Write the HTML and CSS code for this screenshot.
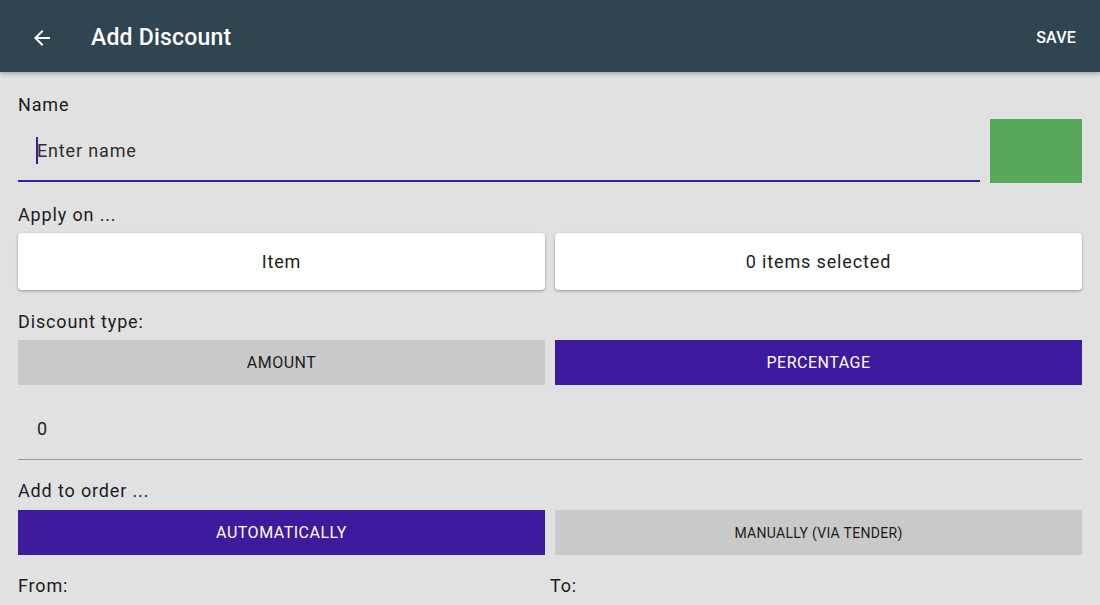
FILE: index.html
```html
<!DOCTYPE html>
<html lang="en">
<head>
<meta charset="utf-8">
<title>Add Discount</title>
<link rel="stylesheet" href="styles.css">
</head>
<body>
<header class="appbar">
  <button class="appbar-back" aria-label="Back">
    <svg viewBox="0 0 24 24" width="24" height="24"><path d="M20 11H7.83l5.59-5.59L12 4l-8 8 8 8 1.41-1.41L7.83 13H20v-2z" fill="#fff"/></svg>
  </button>
  <h1 class="appbar-title">Add Discount</h1>
  <button class="appbar-action">SAVE</button>
</header>

<main class="form">
  <div class="label label-first">Name</div>
  <div class="name-row">
    <div class="field field-active">
      <span class="caret"></span><span class="placeholder">Enter name</span>
    </div>
    <div class="swatch"></div>
  </div>

  <div class="label">Apply on ...</div>
  <div class="pair">
    <button class="card">Item</button>
    <button class="card">0 items selected</button>
  </div>

  <div class="label">Discount type:</div>
  <div class="pair">
    <button class="toggle">AMOUNT</button>
    <button class="toggle toggle-on">PERCENTAGE</button>
  </div>

  <div class="field field-value">0</div>

  <div class="label label-after-field">Add to order ...</div>
  <div class="pair pair-order">
    <button class="toggle toggle-on">AUTOMATICALLY</button>
    <button class="toggle toggle-small">MANUALLY (VIA TENDER)</button>
  </div>

  <div class="pair dates">
    <div class="label label-inline">From:</div>
    <div class="label label-inline label-to">To:</div>
  </div>
</main>
</body>
</html>
```

FILE: styles.css
```css
* {
  box-sizing: border-box;
}

html, body {
  margin: 0;
  height: 100%;
}

body {
  background: #e1e1e1;
  font-family: Roboto, "Noto Sans", "Liberation Sans", sans-serif;
  color: #1c1c1c;
  overflow: hidden;
}

button {
  font-family: inherit;
  border: 0;
  margin: 0;
  cursor: pointer;
}

/* top app bar */
.appbar {
  height: 72px;
  background: #2f4551;
  display: flex;
  align-items: center;
  padding: 2px 24px 0 30px;
  box-shadow: 0 2px 4px rgba(0, 0, 0, 0.25);
  position: relative;
  z-index: 1;
}

.appbar-back {
  background: none;
  padding: 0;
  width: 24px;
  height: 24px;
  display: flex;
  margin-top: 1px;
}

.appbar-title {
  margin: 0 0 0 37px;
  color: #fff;
  font-size: 23px;
  font-weight: 500;
  letter-spacing: 0.2px;
  flex: 1;
  line-height: 1;
}

.appbar-action {
  background: none;
  color: #fff;
  font-size: 16px;
  font-weight: 500;
  padding: 0;
  letter-spacing: 0.2px;
}

/* form body */
.form {
  padding: 0 18px;
}

.label {
  font-size: 18px;
  line-height: 20px;
  letter-spacing: 0.85px;
  margin-top: 22px;
}

.label-first {
  margin-top: 23px;
}

.label-after-field {
  margin-top: 21px;
}

.name-row {
  display: flex;
  gap: 10px;
  margin-top: 4px;
  height: 64px;
}

.field {
  flex: 1;
  display: flex;
  align-items: center;
  padding-left: 18px;
  font-size: 18px;
  letter-spacing: 0.85px;
}

.field-active {
  height: 63px;
  border-bottom: 2px solid #3e1aa0;
  padding-top: 2px;
}

.caret {
  width: 2px;
  height: 27px;
  background: #3e1aa0;
  margin-right: -1px;
}

.placeholder {
  color: #2e2e2e;
}

.swatch {
  width: 92px;
  background: #57a85b;
}

.pair {
  display: grid;
  grid-template-columns: 1fr 1fr;
  gap: 10px;
  margin-top: 8px;
}

.card {
  height: 57px;
  background: #fff;
  border-radius: 4px;
  box-shadow: 0 1px 3px rgba(0, 0, 0, 0.35);
  font-size: 18px;
  letter-spacing: 0.85px;
  color: #1c1c1c;
}

.toggle {
  height: 45px;
  background: #c9c9c9;
  color: #1c1c1c;
  font-size: 16px;
  letter-spacing: 0.5px;
}

.toggle-on {
  background: #3e1a9f;
  color: #fff;
}

.toggle-small {
  font-size: 14px;
  letter-spacing: 0.3px;
}

.field-value {
  height: 65px;
  margin-top: 10px;
  border-bottom: 1px solid #9a9a9a;
  padding-left: 19px;
  padding-top: 2px;
}

.pair-order {
  margin-top: 9px;
}

.dates {
  margin-top: 21px;
}

.label-inline {
  margin-top: 0;
}

.label-to {
  margin-left: -5px;
}
```
